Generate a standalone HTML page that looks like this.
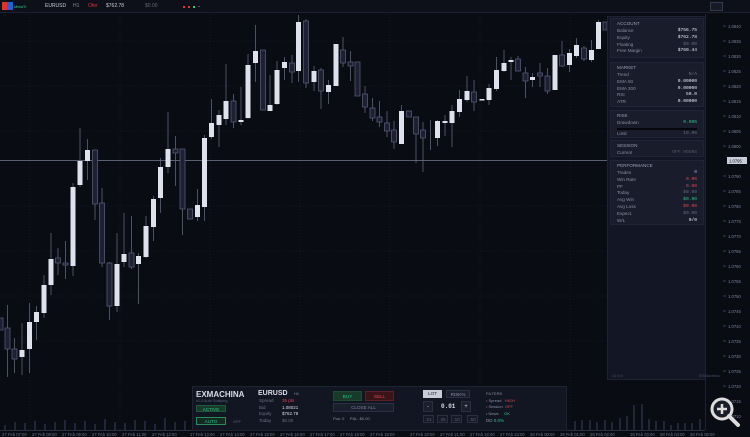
<!DOCTYPE html><html><head><meta charset="utf-8"><style>
*{margin:0;padding:0;box-sizing:border-box}
body{width:750px;height:437px;background:#0a0c14;font-family:"Liberation Sans",sans-serif;color:#aab0c0;overflow:hidden;position:relative}
.a{position:absolute;white-space:nowrap}
.t{font-size:5px;line-height:7px}
.sec{position:absolute;left:610px;width:94px;background:#181c2b;border:1px solid #1f2436}
.row{display:flex;justify-content:space-between;font-size:4.6px;line-height:6.8px;color:#8a90a2;padding:0 6px}
.row b{font-weight:normal;color:#e6e8f0;font-family:"Liberation Mono",monospace}
.hd{font-size:4.6px;color:#9aa0b2;padding:2px 6px 1px;line-height:6px}
.btn{position:absolute;font-size:4.6px;text-align:center;line-height:8px}
</style></head><body>
<div class="a" style="left:0;top:0;width:750px;height:13px;background:#0d1019;border-bottom:1px solid #1c2030"></div>
<div class="a" style="left:2px;top:2px;width:5px;height:8px;background:#d33"></div>
<div class="a" style="left:7px;top:2px;width:6px;height:8px;background:#2b5fd0"></div>
<div class="a t" style="left:14px;top:3px;color:#3c8;font-size:4px">MetaTr</div>
<div class="a t" style="left:45px;top:3px;color:#c8ccd8">EURUSD</div>
<div class="a t" style="left:73px;top:3px;color:#889">H1</div>
<div class="a t" style="left:88px;top:3px;color:#d33">Ofer</div>
<div class="a t" style="left:106px;top:3px;color:#c8ccd8">$762.78</div>
<div class="a t" style="left:145px;top:3px;color:#667">$0.00</div>
<div class="a" style="left:183px;top:6px;width:2px;height:2px;background:#d33"></div>
<div class="a" style="left:188px;top:6px;width:2px;height:2px;background:#d33"></div>
<div class="a" style="left:193px;top:6px;width:2px;height:2px;background:#3c6"></div>
<div class="a" style="left:198px;top:6px;width:2px;height:1px;background:#556"></div>
<div class="a" style="left:710px;top:2px;width:13px;height:9px;border:1px solid #333a4c;background:#161a26"></div>
<svg class="a" style="left:0;top:0" width="750" height="437">
<g stroke="#141826" stroke-width="1" stroke-dasharray="1 2">
<line x1="30" y1="14" x2="30" y2="430"/><line x1="120" y1="14" x2="120" y2="430"/><line x1="210" y1="14" x2="210" y2="430"/><line x1="300" y1="14" x2="300" y2="430"/><line x1="390" y1="14" x2="390" y2="430"/><line x1="480" y1="14" x2="480" y2="430"/><line x1="570" y1="14" x2="570" y2="430"/>
<line x1="0" y1="41" x2="705" y2="41"/><line x1="0" y1="86" x2="705" y2="86"/><line x1="0" y1="131" x2="705" y2="131"/><line x1="0" y1="206" x2="705" y2="206"/><line x1="0" y1="251" x2="705" y2="251"/><line x1="0" y1="296" x2="705" y2="296"/><line x1="0" y1="341" x2="705" y2="341"/>
</g>
<line x1="0" y1="160.5" x2="705" y2="160.5" stroke="#5a6074" stroke-width="1"/>
<line x1="705.5" y1="14" x2="705.5" y2="430" stroke="#1e2232"/>
<g stroke="#6a7088" stroke-width="0.7">
<line x1="7.5" y1="305" x2="7.5" y2="377"/><line x1="14.5" y1="338" x2="14.5" y2="373"/><line x1="22" y1="323" x2="22" y2="375"/><line x1="29.5" y1="303" x2="29.5" y2="373"/><line x1="36.5" y1="306" x2="36.5" y2="340"/><line x1="44" y1="275" x2="44" y2="318"/><line x1="51" y1="233" x2="51" y2="295"/><line x1="58" y1="248" x2="58" y2="275"/><line x1="65.5" y1="241" x2="65.5" y2="279"/><line x1="73" y1="183" x2="73" y2="276"/><line x1="80" y1="128" x2="80" y2="187"/><line x1="87.5" y1="139" x2="87.5" y2="180"/><line x1="95" y1="150" x2="95" y2="220"/><line x1="102" y1="188" x2="102" y2="267"/><line x1="109.5" y1="262" x2="109.5" y2="320"/><line x1="117" y1="233" x2="117" y2="312"/><line x1="124" y1="213" x2="124" y2="267"/><line x1="131.5" y1="216" x2="131.5" y2="269"/><line x1="138.5" y1="253" x2="138.5" y2="304"/><line x1="146" y1="216" x2="146" y2="258"/><line x1="153.5" y1="196" x2="153.5" y2="241"/><line x1="160.5" y1="158" x2="160.5" y2="213"/><line x1="168" y1="112" x2="168" y2="173"/><line x1="175.5" y1="136" x2="175.5" y2="186"/><line x1="182.5" y1="149" x2="182.5" y2="235"/><line x1="197.5" y1="189" x2="197.5" y2="221"/><line x1="204.5" y1="135" x2="204.5" y2="221"/><line x1="211.5" y1="99" x2="211.5" y2="139"/><line x1="219" y1="110" x2="219" y2="147"/><line x1="226" y1="64" x2="226" y2="125"/><line x1="233.5" y1="94" x2="233.5" y2="128"/><line x1="241" y1="87" x2="241" y2="125"/><line x1="248" y1="54" x2="248" y2="119"/><line x1="255.5" y1="25" x2="255.5" y2="82"/><line x1="270" y1="75" x2="270" y2="111"/><line x1="277" y1="61" x2="277" y2="105"/><line x1="284.5" y1="57" x2="284.5" y2="80"/><line x1="292" y1="55" x2="292" y2="83"/><line x1="298.5" y1="15" x2="298.5" y2="82"/>
<line x1="306" y1="19" x2="306" y2="88"/><line x1="314" y1="66" x2="314" y2="91"/><line x1="321" y1="68" x2="321" y2="109"/><line x1="328.5" y1="80" x2="328.5" y2="104"/><line x1="343" y1="37" x2="343" y2="67"/><line x1="350.5" y1="51" x2="350.5" y2="81"/><line x1="365" y1="86" x2="365" y2="113"/><line x1="372.5" y1="98" x2="372.5" y2="121"/><line x1="379.5" y1="101" x2="379.5" y2="127"/><line x1="387" y1="111" x2="387" y2="137"/><line x1="394" y1="121" x2="394" y2="149"/><line x1="401.5" y1="105" x2="401.5" y2="144"/><line x1="416" y1="117" x2="416" y2="163"/><line x1="423" y1="122" x2="423" y2="172"/><line x1="430.5" y1="120" x2="430.5" y2="150"/><line x1="437.5" y1="120" x2="437.5" y2="146"/><line x1="445" y1="115" x2="445" y2="136"/><line x1="452" y1="105" x2="452" y2="147"/><line x1="459.5" y1="90" x2="459.5" y2="117"/><line x1="467" y1="76" x2="467" y2="102"/><line x1="474" y1="80" x2="474" y2="111"/><line x1="489" y1="84" x2="489" y2="105"/><line x1="496.5" y1="57" x2="496.5" y2="91"/><line x1="504" y1="50" x2="504" y2="72"/><line x1="511" y1="57" x2="511" y2="80"/><line x1="518" y1="56" x2="518" y2="71"/><line x1="525.5" y1="67" x2="525.5" y2="98"/><line x1="532.5" y1="73" x2="532.5" y2="87"/><line x1="540" y1="63" x2="540" y2="87"/><line x1="547.5" y1="68" x2="547.5" y2="94"/><line x1="562" y1="41" x2="562" y2="67"/><line x1="569.5" y1="49" x2="569.5" y2="72"/><line x1="576.5" y1="38" x2="576.5" y2="58"/><line x1="584" y1="46" x2="584" y2="61"/><line x1="591.5" y1="40" x2="591.5" y2="62"/><line x1="598.5" y1="20" x2="598.5" y2="49"/>
</g>
<g fill="#dfe2ec">
<rect x="19.5" y="350" width="5" height="7"/><rect x="27" y="322" width="5" height="27"/><rect x="34" y="312" width="5" height="10"/><rect x="41.5" y="285" width="5" height="28"/><rect x="48.5" y="259" width="5" height="26"/><rect x="70.5" y="187" width="5" height="79"/><rect x="77.5" y="161" width="5" height="24"/><rect x="85" y="150" width="5" height="11"/><rect x="114.5" y="264" width="5" height="42"/><rect x="121.5" y="254" width="5" height="8"/><rect x="136" y="256" width="5" height="8"/><rect x="143.5" y="226" width="5" height="31"/><rect x="151" y="199" width="5" height="28"/><rect x="158" y="167" width="5" height="31"/><rect x="165.5" y="149" width="5" height="18"/><rect x="195" y="205" width="5" height="12"/><rect x="202" y="138" width="5" height="69"/><rect x="209" y="123" width="5" height="14"/><rect x="216.5" y="115" width="5" height="10"/><rect x="223.5" y="101" width="5" height="18"/><rect x="238.5" y="120" width="5" height="2"/><rect x="245.5" y="65" width="5" height="53"/><rect x="253" y="51" width="5" height="12"/><rect x="267.5" y="105" width="5" height="6"/><rect x="274.5" y="70" width="5" height="34"/><rect x="282" y="62" width="5" height="6"/><rect x="296" y="22" width="5" height="49"/>
<rect x="311.5" y="71" width="5" height="11"/><rect x="326" y="85" width="5" height="7"/><rect x="333.5" y="44" width="5" height="42"/><rect x="399" y="111" width="5" height="33"/><rect x="435" y="121" width="5" height="17"/><rect x="442.5" y="121" width="5" height="2"/><rect x="449.5" y="111" width="5" height="12"/><rect x="457" y="99" width="5" height="13"/><rect x="464.5" y="91" width="5" height="9"/><rect x="479.5" y="99" width="5" height="1.5"/><rect x="486.5" y="88" width="5" height="12"/><rect x="494" y="70" width="5" height="19"/><rect x="501.5" y="63" width="5" height="8"/><rect x="508.5" y="60" width="5" height="2"/><rect x="530" y="77" width="5" height="3"/><rect x="552.5" y="55" width="5" height="35"/><rect x="567" y="53" width="5" height="12"/><rect x="574" y="45" width="5" height="11"/><rect x="589" y="50" width="5" height="10"/><rect x="596" y="22" width="5" height="27"/>
</g>
<g fill="#1c2031" stroke="#5c6280" stroke-width="0.7">
<rect x="-1" y="318" width="4" height="12"/><rect x="5" y="328" width="5" height="21"/><rect x="12" y="349" width="5" height="10"/><rect x="55.5" y="258" width="5" height="5"/><rect x="63" y="263" width="5" height="2"/><rect x="92.5" y="150" width="5" height="54"/><rect x="99.5" y="203" width="5" height="60"/><rect x="107" y="263" width="5" height="43"/><rect x="129" y="253" width="5" height="14"/><rect x="173" y="149" width="5" height="4"/><rect x="180" y="149" width="5" height="60"/><rect x="187.5" y="209" width="5" height="10"/><rect x="231" y="101" width="5" height="21"/><rect x="260.5" y="50" width="5" height="60"/><rect x="289.5" y="63" width="5" height="9"/>
<rect x="303.5" y="21" width="5" height="62"/><rect x="318.5" y="70" width="5" height="21"/><rect x="340.5" y="50" width="5" height="13"/><rect x="348" y="62" width="5" height="4"/><rect x="355" y="62" width="5" height="34"/><rect x="362.5" y="94" width="5" height="13"/><rect x="370" y="108" width="5" height="10"/><rect x="377" y="117" width="5" height="5"/><rect x="384.5" y="123" width="5" height="8"/><rect x="391.5" y="130" width="5" height="12"/><rect x="406.5" y="111" width="5" height="6"/><rect x="413.5" y="117" width="5" height="17"/><rect x="420.5" y="130" width="5" height="8"/><rect x="471.5" y="92" width="5" height="10"/><rect x="515.5" y="59" width="5" height="12"/><rect x="523" y="73" width="5" height="8"/><rect x="537.5" y="73" width="5" height="3"/><rect x="545" y="76" width="5" height="15"/><rect x="559.5" y="55" width="5" height="11"/><rect x="581.5" y="48" width="5" height="11"/><rect x="603" y="22" width="4" height="8"/>
</g>
<g stroke="#3a4058" stroke-width="1">
<path d="M5 425V430M15 422V430M25 423V430M35 421V430M45 424V430M55 422V430M65 420V430M75 423V430M85 421V430M95 424V430M105 419V430M115 422V430M125 423V430M135 420V430M145 421V430M155 424V430M165 418V430M175 422V430M185 421V430M575 421V430M582 420V430M590 420V430M597 422V430M605 420V430M612 422V430M620 418V430M627 416V430M634 405V430M642 404V430M649 419V430M656 421V430M664 421V430M671 425V430M678 423V430M685 423V430M692 423V430M700 419V430"/>
</g>
<line x1="0" y1="430.5" x2="705" y2="430.5" stroke="#2a2f42"/>
<g fill="#6a7088" font-size="4.2" font-family="Liberation Sans">
<text x="2" y="436">27 Feb 07:00</text><text x="32" y="436">27 Feb 08:00</text><text x="62" y="436">27 Feb 09:00</text><text x="92" y="436">27 Feb 10:00</text><text x="122" y="436">27 Feb 11:00</text><text x="152" y="436">27 Feb 12:00</text><text x="190" y="436">27 Feb 13:00</text><text x="220" y="436">27 Feb 14:00</text><text x="250" y="436">27 Feb 15:00</text><text x="280" y="436">27 Feb 16:00</text><text x="310" y="436">27 Feb 17:00</text><text x="340" y="436">27 Feb 18:00</text><text x="370" y="436">27 Feb 19:00</text><text x="410" y="436">27 Feb 20:00</text><text x="440" y="436">27 Feb 21:00</text><text x="470" y="436">27 Feb 22:00</text><text x="500" y="436">27 Feb 23:00</text><text x="530" y="436">28 Feb 00:00</text><text x="560" y="436">28 Feb 01:00</text><text x="590" y="436">28 Feb 02:00</text><text x="630" y="436">28 Feb 03:00</text><text x="660" y="436">28 Feb 04:00</text><text x="690" y="436">28 Feb 05:00</text>
</g>
<g stroke="#4a5064" stroke-width="0.7">
<path d="M723 26h3M723 41h3M723 56h3M723 71h3M723 86h3M723 101h3M723 116h3M723 131h3M723 146h3M723 176h3M723 191h3M723 206h3M723 221h3M723 236h3M723 251h3M723 266h3M723 281h3M723 296h3M723 311h3M723 326h3M723 341h3M723 356h3M723 371h3M723 386h3M723 401h3M723 416h3"/>
</g>
<g fill="#7a8096" font-size="4.2" font-family="Liberation Sans">
<text x="728" y="28">1.0840</text><text x="728" y="43">1.0835</text><text x="728" y="58">1.0830</text><text x="728" y="73">1.0825</text><text x="728" y="88">1.0820</text><text x="728" y="103">1.0815</text><text x="728" y="118">1.0810</text><text x="728" y="133">1.0805</text><text x="728" y="148">1.0800</text><text x="728" y="178">1.0790</text><text x="728" y="193">1.0785</text><text x="728" y="208">1.0780</text><text x="728" y="223">1.0775</text><text x="728" y="238">1.0770</text><text x="728" y="253">1.0765</text><text x="728" y="268">1.0760</text><text x="728" y="283">1.0755</text><text x="728" y="298">1.0750</text><text x="728" y="313">1.0745</text><text x="728" y="328">1.0740</text><text x="728" y="343">1.0735</text><text x="728" y="358">1.0730</text><text x="728" y="373">1.0725</text><text x="728" y="388">1.0720</text><text x="728" y="403">1.0715</text><text x="728" y="418">1.0710</text>
</g>
<rect x="727" y="157" width="20" height="7" fill="#c8ccd8"/>
<text x="729" y="162.5" fill="#10131c" font-size="4.2" font-family="Liberation Sans">1.0795</text>
</svg>
<div class="a" style="left:607px;top:16px;width:99px;height:364px;background:#131725;border:1px solid #1e2334"></div>
<div class="sec" style="top:18px;height:40px"><div class="hd">ACCOUNT</div>
<div class="row">Balance<b>$756.75</b></div><div class="row">Equity<b>$762.78</b></div><div class="row">Floating<b style="color:#666c80">$0.00</b></div><div class="row">Free Margin<b>$760.44</b></div></div>
<div class="sec" style="top:62px;height:45px"><div class="hd">MARKET</div>
<div class="row">Trend<b style="color:#666c80">N/A</b></div><div class="row">EMA 50<b>0.00000</b></div><div class="row">EMA 200<b>0.00000</b></div><div class="row">RSI<b>50.0</b></div><div class="row">ATR<b>0.00000</b></div></div>
<div class="sec" style="top:110px;height:28px"><div class="hd">RISK</div>
<div class="row">Drawdown<b style="color:#2fc48a">0.00%</b></div>
<div style="margin:1px 6px;height:2px;background:#05070c"></div>
<div class="row">Limit<b style="color:#666c80">10.0%</b></div></div>
<div class="sec" style="top:140px;height:17px"><div class="hd">SESSION</div>
<div class="row">Current<b style="color:#555a6c">OFF HOURS</b></div></div>
<div class="sec" style="top:160px;height:65px"><div class="hd">PERFORMANCE</div>
<div class="row">Trades<b style="color:#8ab4f8">0</b></div><div class="row">Win Rate<b style="color:#e04555">0.0%</b></div><div class="row">PF<b style="color:#e04555">0.00</b></div><div class="row">Today<b style="color:#666c80">$0.00</b></div><div class="row">Avg Win<b style="color:#2fc48a">$0.00</b></div><div class="row">Avg Loss<b style="color:#e04555">$0.00</b></div><div class="row">Expect.<b style="color:#666c80">$0.00</b></div><div class="row">W/L<b>0/0</b></div></div>
<div class="a" style="left:612px;top:373px;font-size:4px;color:#4a5064">v1.0.0</div>
<div class="a" style="left:699px;top:373px;font-size:4px;color:#4a5064">EXMachina</div>
<svg class="a" style="left:705px;top:393px" width="40" height="40"><circle cx="17" cy="16" r="10" fill="#1a1d28" stroke="#ddd" stroke-width="3"/><line x1="24" y1="23" x2="33" y2="32" stroke="#ddd" stroke-width="4" stroke-linecap="round"/><path d="M17 11v10M12 16h10" stroke="#ddd" stroke-width="2.5"/></svg>
<div class="a" style="left:192px;top:386px;width:375px;height:45px;background:#121622;border:1px solid #1e2334"></div>
<div class="a" style="left:196px;top:390px;font-size:8px;font-weight:bold;color:#d8dce8">EXMACHINA</div>
<div class="a" style="left:196px;top:399px;font-size:3.8px;color:#5a6074">v1.0 Auto Scalping</div>
<div class="btn" style="left:196px;top:405px;width:30px;height:7px;line-height:7px;background:#173a2a;border:1px solid #1f5a3c;color:#2fc48a">ACTIVE</div>
<div class="btn" style="left:196px;top:417px;width:30px;height:8px;background:#122a20;border:1px solid #2a8a5a;color:#2fc48a">AUTO</div>
<div class="a" style="left:233px;top:419px;font-size:4px;color:#5a6074">OFF</div>
<div class="a" style="left:258px;top:390px;font-size:7px;font-weight:bold;color:#d8dce8">EURUSD</div>
<div class="a" style="left:294px;top:391px;font-size:4px;color:#889">H1</div>
<div class="a" style="left:259px;top:398px;font-size:4.5px;line-height:6.7px;color:#6a7088">Spread<br>Bid<br>Equity<br>Today</div>
<div class="a" style="left:282px;top:398px;font-size:4.5px;line-height:6.7px;color:#d8dce8"><span style="color:#e04555">35 pts</span><br>1.08021<br>$762.78<br><span style="color:#666c80">$0.00</span></div>
<div class="btn" style="left:333px;top:391px;width:29px;height:10px;line-height:10px;background:#173a2a;border:1px solid #1f4a34;color:#2fc48a">BUY</div>
<div class="btn" style="left:365px;top:391px;width:29px;height:10px;line-height:10px;background:#3a1419;border:1px solid #5a1f27;color:#e04555">SELL</div>
<div class="btn" style="left:333px;top:403px;width:61px;height:9px;background:#1a1f2e;border:1px solid #2a3042;color:#7a8096">CLOSE ALL</div>
<div class="a" style="left:333px;top:416px;font-size:4px;color:#8a90a2">Pos: 0 &nbsp; &nbsp; P&amp;L: $0.00</div>
<div class="btn" style="left:423px;top:390px;width:19px;height:8px;background:#c8ccd8;color:#1a1d28">LOT</div>
<div class="btn" style="left:446px;top:390px;width:24px;height:8px;background:#1a1f2e;border:1px solid #2a3042;color:#8a90a2">RISK%</div>
<div class="btn" style="left:423px;top:401px;width:10px;height:11px;line-height:11px;background:#1a1f2e;border:1px solid #2a3042;color:#ccc;font-size:6px">-</div>
<div class="a" style="left:441px;top:403px;font-size:6px;font-weight:bold;color:#d8dce8;font-family:'Liberation Mono',monospace">0.01</div>
<div class="btn" style="left:461px;top:401px;width:10px;height:11px;line-height:11px;background:#1a1f2e;border:1px solid #2a3042;color:#ccc;font-size:6px">+</div>
<div class="btn" style="left:423px;top:415px;width:11px;height:8px;background:#161a26;border:1px solid #2a3042;color:#5a6074">.01</div>
<div class="btn" style="left:437px;top:415px;width:11px;height:8px;background:#161a26;border:1px solid #2a3042;color:#5a6074">.05</div>
<div class="btn" style="left:451px;top:415px;width:11px;height:8px;background:#161a26;border:1px solid #2a3042;color:#5a6074">.10</div>
<div class="btn" style="left:467px;top:415px;width:11px;height:8px;background:#161a26;border:1px solid #2a3042;color:#5a6074">.50</div>
<div class="a" style="left:486px;top:391px;font-size:4px;line-height:6.5px;color:#8a90a2">FILTERS<br><span style="color:#e04555">•</span> Spread &nbsp; <span style="color:#e04555">HIGH</span><br><span style="color:#e04555">•</span> Session &nbsp;<span style="color:#e04555">OFF</span><br><span style="color:#2fc48a">•</span> News &nbsp; &nbsp; <span style="color:#2fc48a">OK</span></div>
<div class="a" style="left:486px;top:418px;font-size:4.5px;color:#8a90a2">DD <span style="color:#2fc48a">0.0%</span></div>
</body></html>
